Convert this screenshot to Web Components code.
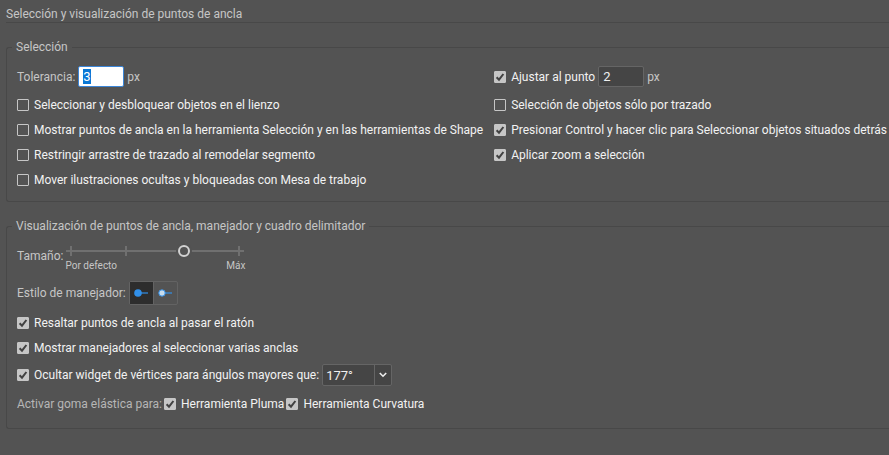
<!DOCTYPE html>
<html lang="es">
<head>
<meta charset="utf-8">
<title>Selección y visualización de puntos de ancla</title>
<style>
  body { margin: 0; background: #535353; }
</style>
</head>
<body>
<anchor-prefs></anchor-prefs>
<script>
  const define = (name, html, setup) => {
    const template = document.createElement('template');
    template.innerHTML = `<style>*{box-sizing:border-box} :host{box-sizing:border-box}</style>${html}`;
    customElements.define(name, class extends HTMLElement {
      constructor() {
        super();
        this.attachShadow({ mode: 'open' }).append(template.content.cloneNode(true));
      }
      connectedCallback() { if (setup) setup(this, this.shadowRoot); }
    });
  };

  define('pref-group', `
    <style>
      :host { display: block; }
      fieldset { margin: 0; min-width: 0; border: 1px solid var(--line); border-right: 0; border-radius: 3px 0 0 3px; padding: var(--group-top, 6px) 0 var(--group-bottom, 9px) 10px; }
      legend { margin-left: -5px; padding: 0 4px; line-height: 16px; color: var(--soft); }
    </style>
    <fieldset><legend><slot name="title"></slot></legend><slot></slot></fieldset>`);

  define('pref-check', `
    <style>
      :host { display: inline-block; }
      label { display: flex; align-items: center; gap: 5px; color: var(--bright); white-space: nowrap; }
      .box { display: grid; flex: none; width: 12px; height: 12px; }
      .box > * { grid-area: 1 / 1; }
      input { appearance: none; margin: 0; width: 12px; height: 12px; border: 1px solid #c6c6c6; border-radius: 1px; }
      input:checked { background: #c6c6c6; }
      svg { visibility: hidden; pointer-events: none; }
      input:checked + svg { visibility: visible; }
    </style>
    <label><span class="box"><input type="checkbox">
      <svg width="12" height="12" viewBox="0 0 12 12" fill="none" stroke="#424242" stroke-width="2"><path d="M2.6 6.2 5 8.7 9.4 3"/></svg></span>
      <span><slot></slot></span></label>`,
    (host, root) => { root.querySelector('input').checked = host.hasAttribute('checked'); });

  define('pref-number', `
    <style>
      :host { display: inline-block; }
      div { display: flex; align-items: center; gap: 3px; color: var(--soft); }
      input { width: 46px; height: 21px; margin: 0; padding: 0 4px; border: 1px solid #656565; border-radius: 2px; background: #454545; color: #f0f0f0; font: 13px var(--face); outline: 0; }
      input:focus { background: #fff; border-color: #3c86d8; color: #222; }
      input::selection { background: #0a78d6; color: #fff; }
    </style>
    <div><label for="n"><slot></slot></label><input id="n" type="text" inputmode="numeric"><span>px</span></div>`,
    (host, root) => {
      const input = root.querySelector('input');
      input.value = host.getAttribute('value');
      if (host.hasAttribute('name-text')) {
        input.setAttribute('aria-label', host.getAttribute('name-text'));
        root.querySelector('label').remove();
      }
      if (host.hasAttribute('active')) { input.focus(); input.select(); }
    });

  define('pref-slider', `
    <style>
      :host { display: flex; align-items: center; gap: 2px; color: var(--soft); }
      .scale { width: 180px; padding-top: 6px; }
      input { display: block; appearance: none; width: 178px; height: 12px; margin: 0 1px;
        background:
          linear-gradient(#707070, #707070) 4px 1px / 2px 10px no-repeat,
          linear-gradient(#707070, #707070) 59px 1px / 2px 10px no-repeat,
          linear-gradient(#707070, #707070) 172px 1px / 2px 10px no-repeat,
          linear-gradient(#707070, #707070) 0 5px / 100% 2px no-repeat; }
      input::-webkit-slider-thumb { appearance: none; width: 12px; height: 12px; border: 2px solid #d2d2d2; border-radius: 50%; background: #535353; box-shadow: 0 0 0 2px #535353; }
      .ends { display: flex; justify-content: space-between; margin-top: 3px; font-size: 10px; line-height: 12px; }
    </style>
    <label for="s"><slot></slot></label>
    <div class="scale"><input id="s" type="range" min="0" max="100" value="67"><div class="ends"><span>Por defecto</span><span>Máx</span></div></div>`);

  define('handle-style', `
    <style>
      :host { display: inline-flex; border: 1px solid #636363; border-radius: 2px; }
      button { display: grid; place-items: center; width: 23px; height: 22px; margin: 0; padding: 0; border: 0; background: none; }
      button + button { width: 24px; border-left: 1px solid #636363; }
      button[aria-pressed=true] { background: #2d2d2d; }
    </style>
    <button type="button" aria-pressed="true" aria-label="Manejador relleno"><svg width="16" height="10" viewBox="0 0 16 10"><path d="M8 5h7" stroke="#3190ea" stroke-width="1.2"/><circle cx="5" cy="5" r="3.8" fill="#3190ea"/></svg></button>
    <button type="button" aria-pressed="false" aria-label="Manejador hueco"><svg width="16" height="10" viewBox="0 0 16 10"><path d="M8 5h7" stroke="#3190ea" stroke-width="1.2"/><circle cx="5" cy="5" r="3.2" fill="#c8dcec" stroke="#3190ea" stroke-width="1"/></svg></button>`);

  define('pref-select', `
    <style>
      :host { display: inline-grid; grid-template-columns: 1fr 18px; width: 70px; height: 22px; }
      select { grid-area: 1 / 1 / 2 / 3; appearance: none; margin: 0; padding: 0 0 0 3px; border: 1px solid #656565; border-radius: 2px; background: #454545; color: #f0f0f0; font: 13px var(--face); }
      span { grid-area: 1 / 2; display: grid; place-items: center; margin: 1px 1px 1px 0; border-left: 1px solid #656565; pointer-events: none; z-index: 1; }
    </style>
    <select aria-label="Ángulo"><option>177°</option></select>
    <span><svg width="8" height="6" viewBox="0 0 8 6" fill="none" stroke="#eee" stroke-width="1.6"><path d="M.8 1 4 4.2 7.2 1"/></svg></span>`);

  define('anchor-prefs', `
    <style>
      :host { --line: #484848; --soft: #c6c6c6; --bright: #f2f2f2; --face: Roboto, "Noto Sans", sans-serif;
        display: block; padding: 6px 0 26px 6px; font: 12px/16px var(--face); color: var(--soft); overflow: hidden; }
      h1 { margin: 0 0 16px; border-bottom: 1px solid var(--line); font: inherit; }
      .grid { display: grid; grid-template-columns: max-content 1fr; grid-template-rows: 31px; grid-auto-rows: 25px; column-gap: 11px; align-items: center; }
      .row { display: flex; align-items: center; gap: 3px; height: 25px; }
      .size { height: 39px; }
      .style { height: 35px; }
      .angle { height: 30px; }
      .band { height: 28px; gap: 2px; }
      .band span { color: #b6b6b6; }
      pref-group + pref-group { --group-top: 2px; --group-bottom: 10px; margin-top: 16px; }
    </style>
    <h1>Selección y visualización de puntos de ancla</h1>
    <pref-group><span slot="title">Selección</span>
      <div class="grid">
        <pref-number value="3" active>Tolerancia:</pref-number>
        <div class="row"><pref-check checked>Ajustar al punto</pref-check><pref-number value="2" name-text="Ajustar al punto"></pref-number></div>
        <pref-check>Seleccionar y desbloquear objetos en el lienzo</pref-check>
        <pref-check>Selección de objetos sólo por trazado</pref-check>
        <pref-check>Mostrar puntos de ancla en la herramienta Selección y en las herramientas de Shape</pref-check>
        <pref-check checked>Presionar Control y hacer clic para Seleccionar objetos situados detrás</pref-check>
        <pref-check>Restringir arrastre de trazado al remodelar segmento</pref-check>
        <pref-check checked>Aplicar zoom a selección</pref-check>
        <pref-check>Mover ilustraciones ocultas y bloqueadas con Mesa de trabajo</pref-check>
      </div>
    </pref-group>
    <pref-group><span slot="title">Visualización de puntos de ancla, manejador y cuadro delimitador</span>
      <div class="row size"><pref-slider>Tamaño:</pref-slider></div>
      <div class="row style"><span>Estilo de manejador:</span><handle-style></handle-style></div>
      <div class="row"><pref-check checked>Resaltar puntos de ancla al pasar el ratón</pref-check></div>
      <div class="row"><pref-check checked>Mostrar manejadores al seleccionar varias anclas</pref-check></div>
      <div class="row angle"><pref-check checked>Ocultar widget de vértices para ángulos mayores que:</pref-check><pref-select></pref-select></div>
      <div class="row band"><span>Activar goma elástica para:</span><pref-check checked>Herramienta Pluma</pref-check><pref-check checked>Herramienta Curvatura</pref-check></div>
    </pref-group>`);
</script>
</body>
</html>
